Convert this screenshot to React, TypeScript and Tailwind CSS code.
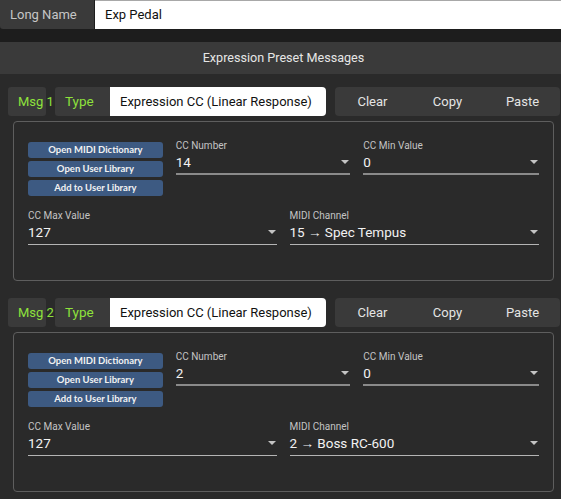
const font = { fontFamily: 'Roboto, "Liberation Sans", sans-serif' }

function Select({ label, value, thick, width }: { label: string; value: string; thick?: boolean; width: string }) {
  return (
    <div className={`flex flex-col ${width}`}>
      <span className="text-[10px] leading-[12px] text-[#c4c4c4]">{label}</span>
      <div className={`flex items-start justify-between h-[23px] pt-[2px] ${thick ? 'border-b-2 border-[#8a8a8a]' : 'border-b border-[#b4b4b4]'}`}>
        <span className="text-[13.5px] text-[#f2f2f2] leading-[16px]">{value}</span>
        <svg width="8" height="5" viewBox="0 0 8 5" className="mt-[6px] mr-[1px]">
          <path d="M0 0 L8 0 L4 4 Z" fill="#c4c4c4" />
        </svg>
      </div>
    </div>
  )
}

function Message({ n, cc, channel }: { n: number; cc: string; channel: string }) {
  return (
    <div>
      <div className="flex h-[29px] pl-[8px]">
        <div className="shrink-0 w-[38px] bg-[#3a3a3a] rounded-[3px] flex items-center pl-[10px] whitespace-nowrap text-[13px] text-[#8ee23c]">
          Msg {n}
        </div>
        <div className="shrink-0 ml-[9px] w-[55px] bg-[#3a3a3a] rounded-l-[3px] flex items-center pl-[10px] text-[13.5px] text-[#8ee23c]">
          Type
        </div>
        <div className="shrink-0 w-[216px] bg-white rounded-r-[4px] flex items-center pl-[10px] text-[13px] text-[#111] whitespace-nowrap">
          Expression CC (Linear Response)
        </div>
        <div className="shrink-0 ml-[9px] w-[225px] bg-[#3a3a3a] rounded-[4px] grid grid-cols-3 text-[13px] text-[#e4e4e4]">
          <span className="flex items-center justify-center">Clear</span>
          <span className="flex items-center justify-center">Copy</span>
          <span className="flex items-center justify-center">Paste</span>
        </div>
      </div>
      <div className="ml-[13px] mr-[7px] mt-[5px] h-[160px] border border-[#5e5e5e] rounded-[4px] px-[14px] pt-[18px]">
        <div className="flex gap-[13px]">
          <div className="w-[135px] mt-[2px] flex flex-col gap-[3px]">
            {['Open MIDI Dictionary', 'Open User Library', 'Add to User Library'].map(t => (
              <button
                key={t}
                className="h-[16px] bg-[#3d5a82] rounded-[3px] text-[9.5px] font-bold text-[#f2f2f2] leading-[16px]"
                style={{ fontFamily: 'Lato, "Liberation Sans", sans-serif' }}
              >
                {t}
              </button>
            ))}
          </div>
          <Select label="CC Number" value={cc} thick width="w-[175px]" />
          <Select label="CC Min Value" value="0" thick width="w-[176px]" />
        </div>
        <div className="flex gap-[13px] mt-[14px]">
          <Select label="CC Max Value" value="127" width="w-[249px]" />
          <Select label="MIDI Channel" value={channel} width="w-[250px]" />
        </div>
      </div>
    </div>
  )
}

export default function App() {
  return (
    <div className="w-[561px] h-[499px] bg-[#1d1d1d] overflow-hidden" style={font}>
      <div className="flex h-[29px]">
        <div className="w-[94px] bg-[#3a3a3a] rounded-bl-[3px] flex items-center pl-[10px] text-[13px] text-[#c6c6c6]">
          Long Name
        </div>
        <div className="ml-[1px] flex-1 bg-white border-t border-[#a8a8a8] flex items-center pl-[10px] text-[13px] text-[#111]">
          Exp Pedal
        </div>
      </div>
      <div className="mt-[13px] bg-[#2a2a2a] h-[460px]">
        <div className="h-[32px] bg-[#3a3a3a] flex items-center justify-center pl-[6px] text-[12.6px] text-[#e6e6e6]">
          Expression Preset Messages
        </div>
        <div className="pt-[13px] flex flex-col gap-[17px]">
          <Message n={1} cc="14" channel="15 → Spec Tempus" />
          <Message n={2} cc="2" channel="2 → Boss RC-600" />
        </div>
      </div>
    </div>
  )
}
